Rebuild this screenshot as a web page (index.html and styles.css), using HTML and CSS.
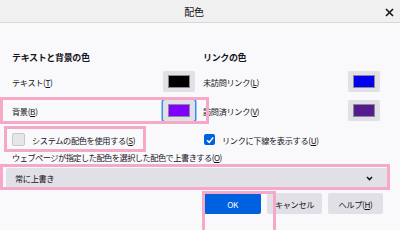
FILE: index.html
```html
<!DOCTYPE html>
<html lang="ja">
<head>
  <meta charset="UTF-8">
  <title>配色</title>
  <link rel="stylesheet" href="styles.css">
</head>
<body>
  <!-- タイトルバー -->
  <div class="titlebar">
    <span class="title">配色</span>
    <svg class="close" width="9" height="9" viewBox="0 0 9 9">
      <path d="M1 1L8 8M8 1L1 8" stroke="#15141a" stroke-width="1.6"/>
    </svg>
  </div>

  <div class="content">
    <div class="columns">
      <div class="col">
        <h2>テキストと背景の色</h2>
        <div class="row">
          <span>テキスト(<u>T</u>)</span>
          <span class="swatch"><span class="fill" style="background:#000000"></span></span>
        </div>
        <div class="row">
          <span>背景(<u>B</u>)</span>
          <span class="swatch focused"><span class="fill" style="background:#8000ff"></span></span>
        </div>
        <div class="row check-row">
          <span class="checkbox"></span>
          <span>システムの配色を使用する(<u>S</u>)</span>
        </div>
      </div>
      <div class="col">
        <h2>リンクの色</h2>
        <div class="row">
          <span>未訪問リンク(<u>L</u>)</span>
          <span class="swatch"><span class="fill" style="background:#0000ee"></span></span>
        </div>
        <div class="row">
          <span>訪問済リンク(<u>V</u>)</span>
          <span class="swatch"><span class="fill" style="background:#551a8b"></span></span>
        </div>
        <div class="row check-row">
          <span class="checkbox checked">
            <svg width="10" height="10" viewBox="0 0 10 10">
              <path d="M2 5.2L4.2 7.4L8.2 2.6" stroke="#fff" stroke-width="1.5" fill="none"/>
            </svg>
          </span>
          <span>リンクに下線を表示する(<u>U</u>)</span>
        </div>
      </div>
    </div>

    <div class="override-label">ウェブページが指定した配色を選択した配色で上書きする(<u>O</u>)</div>
  </div>

  <div class="select-wrap">
    <div class="select">
      <span>常に上書き</span>
      <svg width="7" height="5" viewBox="0 0 7 5">
        <path d="M1 1L3.5 3.6L6 1" stroke="#15141a" stroke-width="1.5" fill="none"/>
      </svg>
    </div>
  </div>

  <div class="buttons">
    <button class="btn primary">OK</button>
    <button class="btn">キャンセル</button>
    <button class="btn">ヘルプ(<u>H</u>)</button>
  </div>

  <!-- 強調枠 -->
  <div class="mark" style="left:0;top:97px;width:209px;height:27px"></div>
  <div class="mark" style="left:4px;top:126px;width:142px;height:26px"></div>
  <div class="mark" style="left:0;top:164px;width:390px;height:26px"></div>
  <div class="mark" style="left:202px;top:191px;width:74px;height:42px"></div>
</body>
</html>
```

FILE: styles.css
```css
/* 全体 */
body {
  margin: 0;
  width: 400px;
  height: 230px;
  overflow: hidden;
  position: relative;
  background: #f9f9fb;
  color: #15141a;
  font-family: "Noto Sans CJK JP", "Noto Sans", sans-serif;
  font-size: 8.2px;
  letter-spacing: -0.35px;
}

u {
  text-decoration: underline;
  text-underline-offset: 1px;
}

/* タイトルバー */
.titlebar {
  height: 23px;
  background: #f0f0f0;
  border-bottom: 1px solid #d8d8d8;
  box-sizing: border-box;
  display: flex;
  align-items: center;
  justify-content: center;
  position: relative;
}

.title {
  font-size: 10px;
  margin-left: -12px;
}

.close {
  position: absolute;
  right: 6px;
  top: 8px;
}

/* 本文 */
.content {
  padding: 28px 20px 0 12px;
}

.columns {
  display: grid;
  grid-template-columns: 183px 177px;
  column-gap: 8px;
}

h2 {
  margin: 0 0 6px;
  font-size: 9px;
  font-weight: bold;
  line-height: 14px;
}

.row {
  display: flex;
  align-items: center;
  justify-content: space-between;
  height: 21px;
  margin-bottom: 8px;
}

.check-row {
  justify-content: flex-start;
  gap: 7px;
  margin-bottom: 0;
}

/* 色ボタン */
.swatch {
  width: 32px;
  height: 21px;
  background: #e0e0e6;
  border-radius: 2px;
  box-sizing: border-box;
  padding: 4px 5px;
  display: flex;
}

.swatch.focused {
  box-shadow: 0 0 0 1.5px #3b8ee6;
}

.fill {
  flex: 1;
  border: 1px solid #8a8a95;
}

/* チェックボックス */
.checkbox {
  width: 13px;
  height: 13px;
  box-sizing: border-box;
  background: #e6e6ea;
  border: 1px solid #c8c8cc;
  border-radius: 2px;
  flex-shrink: 0;
}

.checkbox.checked {
  width: 11px;
  height: 11px;
  background: #0061e0;
  border: none;
  display: flex;
  align-items: center;
  justify-content: center;
  margin-left: 1px;
}

.override-label {
  margin-top: 1px;
  line-height: 12px;
  letter-spacing: -0.5px;
}

/* セレクト */
.select-wrap {
  padding: 5px 12px 0 6px;
}

.select {
  height: 20px;
  background: #e0e0e6;
  border-radius: 2px;
  display: flex;
  align-items: center;
  justify-content: space-between;
  padding: 0 15px 0 9px;
}

/* ボタン */
.buttons {
  display: flex;
  justify-content: flex-end;
  gap: 6px;
  padding: 5px 17px 0 0;
}

.btn {
  height: 21px;
  width: 55px;
  border: none;
  border-radius: 2px;
  background: #e0e0e6;
  color: #15141a;
  font-family: inherit;
  font-size: 8.2px;
  letter-spacing: -0.35px;
  padding: 0;
}

.btn.primary {
  width: 57px;
  background: #0061e0;
  color: #fff;
}

/* 強調枠（ピンク） */
.mark {
  position: absolute;
  border: 3px solid #f5a8c7;
  box-sizing: border-box;
}
```
